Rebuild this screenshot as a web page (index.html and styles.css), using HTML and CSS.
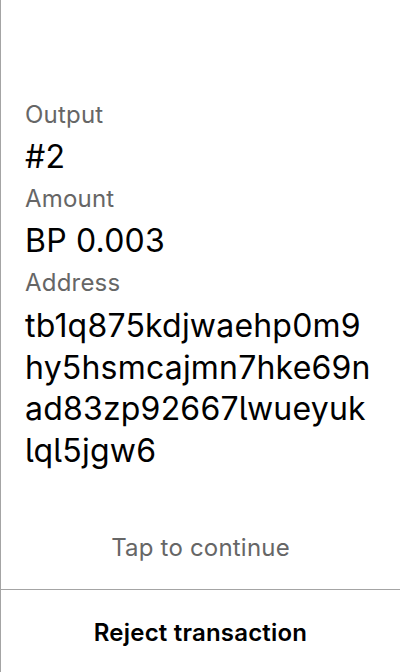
FILE: index.html
```html
<!DOCTYPE html>
<html>
<head>
<meta charset="utf-8">
<link rel="stylesheet" href="styles.css">
</head>
<body>
<div class="screen">
  <div class="content">
    <div class="label">Output</div>
    <div class="value">#2</div>
    <div class="label">Amount</div>
    <div class="value">BP 0.003</div>
    <div class="label">Address</div>
    <div class="value address">tb1q875kdjwaehp0m9hy5hsmcajmn7hke69nad83zp92667lwueyuklql5jgw6</div>
  </div>
  <div class="tap">Tap to continue</div>
  <div class="reject">Reject transaction</div>
</div>
</body>
</html>
```
FILE: styles.css
```css
html, body {
  margin: 0;
  padding: 0;
  background: #fff;
}
body {
  font-family: Inter, "Noto Sans", sans-serif;
  font-feature-settings: "cv05" 1;
  letter-spacing: 0.0125em;
  color: #000;
}
.screen {
  width: 400px;
  height: 672px;
  box-sizing: border-box;
  border-left: 1px solid #a4a4a4;
  display: flex;
  flex-direction: column;
}
.content {
  flex: 1;
  padding: 99px 27px 0 24px;
  display: flex;
  flex-direction: column;
  gap: 6px;
}
.label {
  font-size: 24px;
  line-height: 32px;
  color: #666;
}
.value {
  font-size: 32px;
  line-height: 40px;
}
.address {
  line-height: 41.5px;
  word-break: break-all;
}
.tap {
  text-align: center;
  font-size: 24px;
  line-height: 32px;
  color: #666;
  padding-bottom: 25px;
}
.reject {
  border-top: 1px solid #a4a4a4;
  height: 83px;
  box-sizing: border-box;
  padding-top: 2px;
  display: flex;
  align-items: center;
  justify-content: center;
  font-size: 24px;
  font-weight: 600;
}
```
